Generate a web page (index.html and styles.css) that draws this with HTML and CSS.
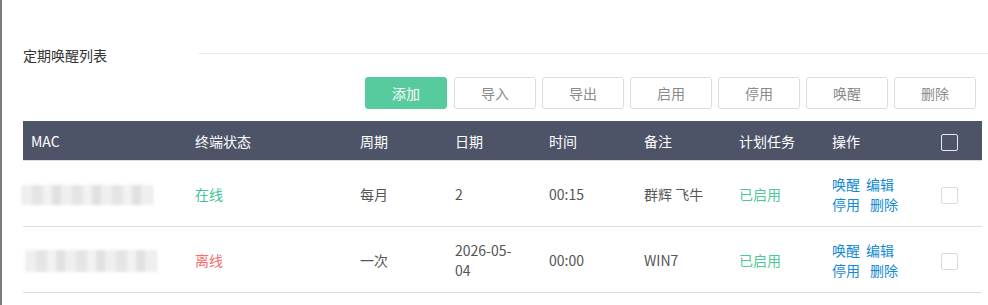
FILE: index.html
```html
<!DOCTYPE html>
<html lang="zh-CN">
<head>
  <meta charset="UTF-8">
  <title>定期唤醒列表</title>
  <link rel="stylesheet" href="styles.css">
</head>
<body>

<div class="page">
  <!-- Title -->
  <div class="title-bar">
    <span class="title">定期唤醒列表</span>
    <span class="title-line"></span>
  </div>

  <!-- Toolbar -->
  <div class="toolbar">
    <button class="btn btn-primary">添加</button>
    <button class="btn">导入</button>
    <button class="btn">导出</button>
    <button class="btn">启用</button>
    <button class="btn">停用</button>
    <button class="btn">唤醒</button>
    <button class="btn">删除</button>
  </div>

  <!-- Wake list -->
  <table class="wake-table">
    <colgroup>
      <col style="width:164px">
      <col style="width:165px">
      <col style="width:95px">
      <col style="width:94px">
      <col style="width:95px">
      <col style="width:95px">
      <col style="width:93px">
      <col style="width:109px">
      <col style="width:49px">
    </colgroup>
    <thead>
      <tr>
        <th>MAC</th>
        <th>终端状态</th>
        <th>周期</th>
        <th>日期</th>
        <th>时间</th>
        <th>备注</th>
        <th>计划任务</th>
        <th>操作</th>
        <th><span class="check check-head"></span></th>
      </tr>
    </thead>
    <tbody>
      <tr>
        <td><span class="mask"></span></td>
        <td class="online">在线</td>
        <td>每月</td>
        <td><span class="date">2</span></td>
        <td>00:15</td>
        <td>群辉 飞牛</td>
        <td class="enabled">已启用</td>
        <td class="actions">
          <a href="#" class="link">唤醒</a><a href="#" class="link">编辑</a><br>
          <a href="#" class="link wide">停用</a><a href="#" class="link">删除</a>
        </td>
        <td><span class="check"></span></td>
      </tr>
      <tr>
        <td><span class="mask mask-alt"></span></td>
        <td class="offline">离线</td>
        <td>一次</td>
        <td><span class="date">2026-05-04</span></td>
        <td>00:00</td>
        <td>WIN7</td>
        <td class="enabled">已启用</td>
        <td class="actions">
          <a href="#" class="link">唤醒</a><a href="#" class="link">编辑</a><br>
          <a href="#" class="link wide">停用</a><a href="#" class="link">删除</a>
        </td>
        <td><span class="check"></span></td>
      </tr>
    </tbody>
  </table>
</div>

</body>
</html>
```

FILE: styles.css
```css
body {
  margin: 0;
  padding: 0;
  background-color: #fff;
  font-family: "Noto Sans CJK SC", "Noto Sans", sans-serif;
  font-size: 14px;
  color: #555;
}
.page {
  border-left: 2px solid #7b7b7b;
  min-height: 305px;
  box-sizing: border-box;
  padding-left: 21px;
  padding-top: 45px;
}
.title-bar {
  display: flex;
  align-items: center;
  height: 20px;
}
.title {
  width: 175px;
  flex-shrink: 0;
  color: #333;
  font-size: 14px;
  line-height: 20px;
}
.title-line {
  flex: 1;
  height: 1px;
  margin-top: -3px;
  background-color: #ebebeb;
}
.toolbar {
  display: flex;
  justify-content: flex-end;
  gap: 6px;
  margin-top: 12px;
  padding-right: 12px;
}
.btn {
  width: 82px;
  height: 32px;
  border: 1px solid #dcdcdc;
  border-radius: 3px;
  background-color: #fff;
  color: #8a8a8a;
  font-family: inherit;
  font-size: 14px;
  padding: 0;
  cursor: pointer;
}
.btn-primary {
  background-color: #57cb9e;
  border-color: #57cb9e;
  color: #fff;
  margin-right: 1px;
}
.wake-table {
  width: 959px;
  margin-top: 12px;
  border-collapse: collapse;
  table-layout: fixed;
}
.wake-table th {
  height: 39px;
  padding: 0 8px;
  background-color: #4e5468;
  color: #fff;
  font-weight: normal;
  text-align: left;
}
.wake-table td {
  padding: 13px 8px 12px;
  line-height: 20px;
  border-top: 1px solid #dedede;
  border-bottom: 1px solid #dedede;
  vertical-align: middle;
  color: #555;
}
.date {
  display: inline-block;
  max-width: 62px;
  word-break: break-all;
}
.online {
  color: #46c395 !important;
}
.offline {
  color: #f66d6d !important;
}
.enabled {
  color: #4fc898 !important;
}
.link {
  color: #1489d3;
  text-decoration: none;
  margin-right: 6px;
}
.link.wide {
  margin-right: 10px;
}
.check {
  display: inline-block;
  width: 15px;
  height: 15px;
  border: 1px solid #dadada;
  border-radius: 2px;
  vertical-align: middle;
  background-color: #fff;
}
.check-head {
  border-color: #e8e8ee;
  background-color: transparent;
}
.mask {
  display: inline-block;
  width: 132px;
  height: 20px;
  margin-left: -10px;
  vertical-align: middle;
  background: repeating-linear-gradient(90deg, #eeeff0 0 11px, #e6e5e5 11px 22px, #f3f2f1 22px 31px, #e2e1e1 31px 40px);
  filter: blur(1.5px);
}
.mask-alt {
  margin-left: -6px;
  height: 22px;
}
```
